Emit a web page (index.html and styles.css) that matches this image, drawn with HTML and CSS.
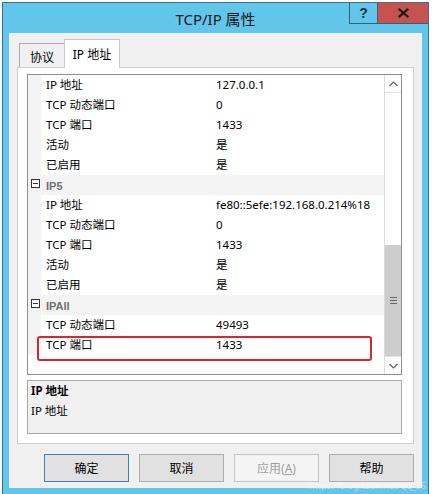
FILE: index.html
```html
<!DOCTYPE html>
<html lang="zh-CN">
<head>
<meta charset="utf-8">
<title>TCP/IP 属性</title>
<link rel="stylesheet" href="styles.css">
</head>
<body>
<div class="window">
  <div class="titlebar">
    <div class="title">TCP/IP 属性</div>
    <div class="caption-btns">
      <div class="cbtn help">?</div>
      <div class="cbtn close">
        <svg width="11" height="10" viewBox="0 0 11 10"><path d="M1.5 1.5 L9.5 8.5 M9.5 1.5 L1.5 8.5" stroke="#1a1a1a" stroke-width="2.2" stroke-linecap="square"/></svg>
      </div>
    </div>
  </div>
  <div class="client">
    <div class="tabs">
      <div class="tab">协议</div>
      <div class="tab active">IP 地址</div>
    </div>
    <div class="panel">
      <div class="grid">
        <div class="rows">
          <div class="row"><span class="gut"></span><span class="lbl">IP 地址</span><span class="val">127.0.0.1</span></div>
          <div class="row"><span class="gut"></span><span class="lbl">TCP 动态端口</span><span class="val">0</span></div>
          <div class="row"><span class="gut"></span><span class="lbl">TCP 端口</span><span class="val">1433</span></div>
          <div class="row"><span class="gut"></span><span class="lbl">活动</span><span class="val">是</span></div>
          <div class="row"><span class="gut"></span><span class="lbl">已启用</span><span class="val">是</span></div>
          <div class="row cat"><span class="gut"><span class="minus"></span></span><span class="cat-name">IP5</span></div>
          <div class="row"><span class="gut"></span><span class="lbl">IP 地址</span><span class="val">fe80::5efe:192.168.0.214%18</span></div>
          <div class="row"><span class="gut"></span><span class="lbl">TCP 动态端口</span><span class="val">0</span></div>
          <div class="row"><span class="gut"></span><span class="lbl">TCP 端口</span><span class="val">1433</span></div>
          <div class="row"><span class="gut"></span><span class="lbl">活动</span><span class="val">是</span></div>
          <div class="row"><span class="gut"></span><span class="lbl">已启用</span><span class="val">是</span></div>
          <div class="row cat"><span class="gut"><span class="minus"></span></span><span class="cat-name">IPAll</span></div>
          <div class="row"><span class="gut"></span><span class="lbl">TCP 动态端口</span><span class="val">49493</span></div>
          <div class="row"><span class="gut"></span><span class="lbl">TCP 端口</span><span class="val">1433</span></div>
          <div class="highlight"></div>
        </div>
        <div class="scrollbar">
          <div class="sb-btn">
            <svg width="9" height="6" viewBox="0 0 9 6"><path d="M0.5 5 L4.5 1 L8.5 5" fill="none" stroke="#606060" stroke-width="1.2"/></svg>
          </div>
          <div class="sb-track"></div>
          <div class="sb-thumb"><span class="grip"></span></div>
          <div class="sb-btn down">
            <svg width="9" height="6" viewBox="0 0 9 6"><path d="M0.5 1 L4.5 5 L8.5 1" fill="none" stroke="#606060" stroke-width="1.2"/></svg>
          </div>
        </div>
      </div>
      <div class="desc">
        <div class="desc-title">IP 地址</div>
        <div class="desc-text">IP 地址</div>
      </div>
    </div>
    <div class="buttons">
      <div class="btn default">确定</div>
      <div class="btn">取消</div>
      <div class="btn disabled">应用(<u>A</u>)</div>
      <div class="btn">帮助</div>
    </div>
  </div>
  <div class="watermark">https://blog.csdn.net/qq_36</div>
</div>
</body>
</html>
```
FILE: styles.css
```css
* { box-sizing: border-box; }
html, body { margin: 0; padding: 0; background: #ffffff; }
body {
  font-family: "Noto Sans", "Noto Sans CJK SC", sans-serif;
  font-size: 11.5px;
  color: #000;
  width: 439px;
  height: 494px;
  overflow: hidden;
}
.window {
  position: relative;
  margin: 2px 0 0 2px;
  width: 427px;
  height: 494px;
  border: 1px solid #3d6f8a;
  border-bottom: none;
  background: #62c5ea;
  display: flex;
  flex-direction: column;
}
.titlebar {
  position: relative;
  height: 30px;
  flex: none;
  display: flex;
  align-items: center;
  justify-content: center;
}
.title {
  font-size: 15px;
  color: #1a1a1a;
  line-height: 30px;
  padding-top: 1px;
}
.caption-btns {
  position: absolute;
  top: 0;
  right: 0;
  display: flex;
}
.cbtn {
  height: 21px;
  display: flex;
  align-items: center;
  justify-content: center;
  border-bottom: 1px solid #35607a;
}
.help {
  width: 29px;
  border-left: 1px solid #35607a;
  border-right: 1px solid #35607a;
  background: #62c5ea;
  color: #1c3550;
  font-family: "Liberation Sans", sans-serif;
  font-weight: bold;
  font-size: 14px;
}
.close {
  width: 50px;
  background: #c8524f;
}
.client {
  margin: 0 6px;
  height: 455px;
  background: #f0f0f0;
  display: flex;
  flex-direction: column;
  padding: 6px 8px 0 8px;
}
.tabs {
  display: flex;
  align-items: flex-end;
  height: 28px;
  padding-left: 2px;
  position: relative;
  z-index: 2;
}
.tab {
  height: 24px;
  width: 45px;
  border: 1px solid #acacac;
  border-bottom: none;
  border-right: none;
  background: #f0f0f0;
  display: flex;
  align-items: center;
  justify-content: center;
  font-size: 12px;
  padding-top: 2px;
  margin-bottom: 0;
}
.tab.active {
  height: 29px;
  width: 56px;
  margin-bottom: -1px;
  background: #ffffff;
  border: 1px solid #c8c8c8;
  border-bottom: none;
  padding-top: 0;
}
.panel {
  width: 397px;
  height: 377px;
  border: 1px solid #d0d0d0;
  background: #ffffff;
  padding: 6px 11px 9px 9px;
  display: flex;
  flex-direction: column;
  gap: 5px;
}
.grid {
  height: 301px;
  border: 1px solid #8a8f96;
  display: flex;
  background: #fff;
}
.rows {
  position: relative;
  flex: 1;
  display: flex;
  flex-direction: column;
  background: #fff;
}
.row {
  height: 20px;
  line-height: 20px;
  display: flex;
  white-space: nowrap;
}
.gut {
  width: 13px;
  flex: none;
  background: #f3f3f4;
  position: relative;
}
.lbl {
  width: 175px;
  flex: none;
  padding-left: 5px;
}
.val { flex: 1; }
.row.cat { background: #f3f3f4; }
.cat-name {
  padding-left: 5px;
  font-family: "Liberation Sans", sans-serif;
  font-weight: bold;
  font-size: 11px;
  color: #707070;
  padding-top: 1px;
}
.minus {
  position: absolute;
  left: 3px;
  top: 4px;
  width: 9px;
  height: 9px;
  border: 1px solid #333;
  background: #fff;
}
.minus::after {
  content: "";
  position: absolute;
  left: 1px;
  right: 1px;
  top: 3px;
  height: 1px;
  background: #333;
}
.highlight {
  position: absolute;
  left: 9px;
  top: 261px;
  width: 335px;
  height: 25px;
  border: 2.5px solid #d9252b;
  border-radius: 3px;
}
.scrollbar {
  width: 17px;
  flex: none;
  display: flex;
  flex-direction: column;
  border-left: 1px solid #dcdcdc;
  background: #fff;
}
.sb-btn {
  height: 18px;
  flex: none;
  display: flex;
  align-items: center;
  justify-content: center;
  border-bottom: 1px solid #e3e3e3;
}
.sb-btn.down {
  border-bottom: none;
  border-top: 1px solid #e3e3e3;
}
.sb-track { flex: 1; background: #fff; }
.sb-thumb {
  height: 111px;
  flex: none;
  background: #cdcdcd;
  display: flex;
  align-items: center;
  justify-content: center;
}
.grip {
  width: 7px;
  height: 7px;
  border-top: 1px solid #666;
  border-bottom: 1px solid #666;
  position: relative;
}
.grip::after {
  content: "";
  position: absolute;
  left: 0;
  right: 0;
  top: 2px;
  height: 1px;
  background: #666;
}
.desc {
  height: 54px;
  border: 1px solid #a8a8a8;
  background: #f0f0f0;
  padding: 0 3px;
  line-height: 20px;
}
.desc-title { font-weight: bold; }
.buttons {
  display: flex;
  justify-content: flex-end;
  gap: 10px;
  margin-top: 10px;
}
.btn {
  width: 85px;
  height: 28px;
  border: 1px solid #adadad;
  background: #e1e1e1;
  display: flex;
  align-items: center;
  justify-content: center;
  font-size: 12px;
}
.btn.default { border-color: #3f7fb5; }
.btn.disabled {
  background: #f4f4f4;
  border-color: #c4c4c4;
  color: #a0a0a0;
}
.watermark {
  position: absolute;
  right: 2px;
  bottom: 5px;
  font-size: 9px;
  line-height: 10px;
  color: rgba(255, 255, 255, 0.5);
  white-space: nowrap;
}
```
